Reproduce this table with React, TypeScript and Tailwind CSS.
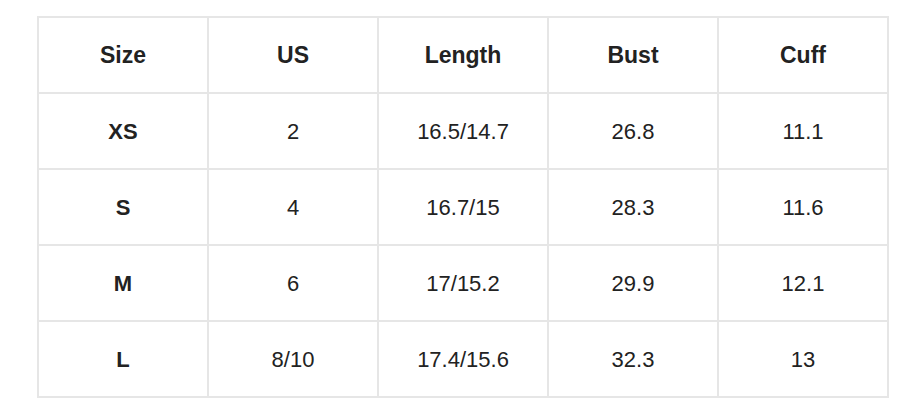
import React from "react";

const headers = ["Size", "US", "Length", "Bust", "Cuff"];
const rows = [
  ["XS", "2", "16.5/14.7", "26.8", "11.1"],
  ["S", "4", "16.7/15", "28.3", "11.6"],
  ["M", "6", "17/15.2", "29.9", "12.1"],
  ["L", "8/10", "17.4/15.6", "32.3", "13"],
];

export default function App() {
  return (
    <div className="w-[921px] h-[416px] bg-white pt-[16px] pl-[37px]" style={{ fontFamily: '"Liberation Sans", Arial, sans-serif' }}>
      <div className="w-[852px] grid grid-cols-5 gap-[2px] p-[2px] bg-[#e6e6e6] text-[22px] text-[#222222]">
        {headers.map((h) => (
          <div key={h} className="bg-white h-[74px] flex items-center justify-center font-bold text-[23px]">
            {h}
          </div>
        ))}
        {rows.map((r) =>
          r.map((c, i) => (
            <div
              key={r[0] + i}
              className={`bg-white h-[74px] flex items-center justify-center ${i === 0 ? "font-bold" : ""}`}
            >
              {c}
            </div>
          ))
        )}
      </div>
    </div>
  );
}
